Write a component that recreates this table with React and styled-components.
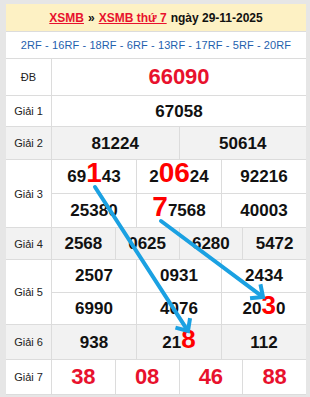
import React from "react";
import styled, { createGlobalStyle } from "styled-components";

const GlobalStyle = createGlobalStyle`
  body {
    margin: 0;
    background: #e6e6e6;
    font-family: "Liberation Sans", Arial, sans-serif;
  }
`;

const Page = styled.div`
  position: relative;
  width: 310px;
  height: 397px;
  padding: 4px 4px 0 6px;
  box-sizing: border-box;
  overflow: hidden;
`;

const Board = styled.div`
  display: flex;
  flex-direction: column;
  gap: 1px;
  background: #dcdcdc;
  border-bottom: 1px solid #dcdcdc;
`;

const Header = styled.div`
  height: 27px;
  background: #fdf1c4;
  display: flex;
  align-items: center;
  justify-content: center;
  gap: 4px;
  font-size: 12px;
  font-weight: bold;
  color: #111;
`;

const HeadLink = styled.a`
  color: #e8112d;
  text-decoration: underline;
`;

const RfRow = styled.div`
  height: 26px;
  background: #fff;
  display: flex;
  align-items: center;
  justify-content: center;
  font-size: 11px;
  letter-spacing: 0.1px;
  color: #1f5fae;
`;

const Row = styled.div`
  display: grid;
  grid-template-columns: 45px 1fr;
  column-gap: 1px;
  height: ${(p) => p.$h}px;
`;

const Label = styled.div`
  background: ${(p) => (p.$alt ? "#f2f2f2" : "#fff")};
  display: flex;
  align-items: center;
  justify-content: center;
  font-size: 11px;
  color: #222;
`;

const Values = styled.div`
  display: grid;
  grid-template-columns: repeat(${(p) => p.$cols}, 1fr);
  grid-auto-rows: 1fr;
  gap: 1px;
`;

const Cell = styled.div`
  background: ${(p) => (p.$alt ? "#f2f2f2" : "#fff")};
  display: flex;
  align-items: center;
  justify-content: center;
  font-weight: bold;
  font-size: ${(p) => (p.$red ? 22 : 17)}px;
  color: ${(p) => (p.$red ? "#e8112d" : "#111")};
`;

const Num = styled.span`
  line-height: 1;
`;

const Hi = styled.span`
  color: #ff0000;
  font-size: ${(p) => p.$size}px;
  line-height: 0;
`;

const Overlay = styled.svg`
  position: absolute;
  left: 0;
  top: 0;
  pointer-events: none;
`;

const rf = ["2RF", "16RF", "18RF", "6RF", "13RF", "17RF", "5RF", "20RF"];

const rows = [
  { label: "ĐB", h: 36, cols: 1, red: true, cells: ["66090"] },
  { label: "Giải 1", h: 30, cols: 1, cells: ["67058"] },
  { label: "Giải 2", h: 32, cols: 2, alt: true, cells: ["81224", "50614"] },
  {
    label: "Giải 3",
    h: 67,
    cols: 3,
    cells: ["69[1]43", "2[06]24", "92216", "25380", "[7]7568", "40003"],
  },
  { label: "Giải 4", h: 31, cols: 4, alt: true, cells: ["2568", "0625", "6280", "5472"] },
  {
    label: "Giải 5",
    h: 64,
    cols: 3,
    cells: ["2507", "0931", "2434", "6990", "4076", "20{3}0"],
  },
  { label: "Giải 6", h: 34, cols: 3, alt: true, cells: ["938", "21{8}", "112"] },
  { label: "Giải 7", h: 34, cols: 4, red: true, cells: ["38", "08", "46", "88"] },
];

// [x] = big red digit, {x} = slightly smaller red digit
function renderNumber(text) {
  return text.split(/(\[[^\]]+\]|\{[^}]+\})/).map((part, i) => {
    if (part.startsWith("[")) return <Hi key={i} $size={28}>{part.slice(1, -1)}</Hi>;
    if (part.startsWith("{")) return <Hi key={i} $size={26}>{part.slice(1, -1)}</Hi>;
    return part;
  });
}

const arrows = [
  { from: [95, 187], to: [188, 331] },
  { from: [161, 221], to: [263, 297] },
];

function Arrow({ from, to }) {
  const [x1, y1] = from;
  const [x2, y2] = to;
  const a = Math.atan2(y2 - y1, x2 - x1);
  const len = 13;
  const spread = (42 * Math.PI) / 180;
  const w1 = [x2 - len * Math.cos(a - spread), y2 - len * Math.sin(a - spread)];
  const w2 = [x2 - len * Math.cos(a + spread), y2 - len * Math.sin(a + spread)];
  return (
    <g stroke="#1ba1e2" strokeWidth="4" fill="none" strokeLinecap="round">
      <line x1={x1} y1={y1} x2={x2 - 2 * Math.cos(a)} y2={y2 - 2 * Math.sin(a)} />
      <polyline
        points={`${w1[0]},${w1[1]} ${x2},${y2} ${w2[0]},${w2[1]}`}
        strokeLinejoin="miter"
        strokeLinecap="butt"
      />
    </g>
  );
}

export default function App() {
  return (
    <>
      <GlobalStyle />
      <Page>
        <Board>
          <Header>
            <HeadLink>XSMB</HeadLink>
            <span>»</span>
            <HeadLink>XSMB thứ 7</HeadLink>
            <span>ngày 29-11-2025</span>
          </Header>
          <RfRow>{rf.join(" - ")}</RfRow>
          {rows.map((row) => (
            <Row key={row.label} $h={row.h}>
              <Label $alt={row.alt}>{row.label}</Label>
              <Values $cols={row.cols}>
                {row.cells.map((c, i) => (
                  <Cell key={i} $alt={row.alt} $red={row.red}>
                    <Num>{renderNumber(c)}</Num>
                  </Cell>
                ))}
              </Values>
            </Row>
          ))}
        </Board>
        <Overlay width="310" height="397" viewBox="0 0 310 397">
          {arrows.map((a, i) => (
            <Arrow key={i} {...a} />
          ))}
        </Overlay>
      </Page>
    </>
  );
}
